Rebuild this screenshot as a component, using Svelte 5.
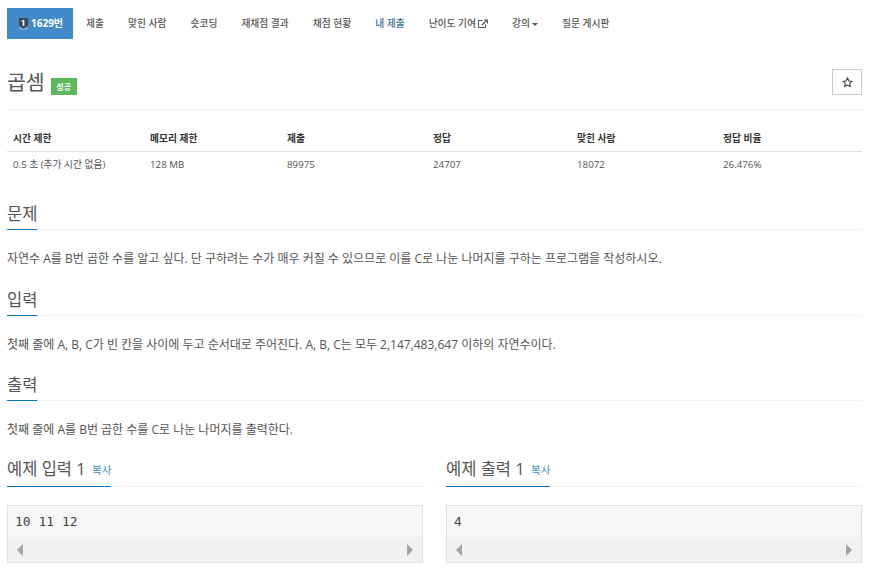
<script lang="ts">
const tabs = [
  { label: "제출" },
  { label: "맞힌 사람" },
  { label: "숏코딩" },
  { label: "재채점 결과" },
  { label: "채점 현황" },
  { label: "내 제출", mine: true },
  { label: "난이도 기여", external: true },
  { label: "강의", caret: true },
  { label: "질문 게시판" }
];
const heads = ["시간 제한", "메모리 제한", "제출", "정답", "맞힌 사람", "정답 비율"];
const cells = ["0.5 초 (추가 시간 없음)", "128 MB", "89975", "24707", "18072", "26.476%"];
const sections = [
  { title: "문제", text: "자연수 A를 B번 곱한 수를 알고 싶다. 단 구하려는 수가 매우 커질 수 있으므로 이를 C로 나눈 나머지를 구하는 프로그램을 작성하시오." },
  { title: "입력", text: "첫째 줄에 A, B, C가 빈 칸을 사이에 두고 순서대로 주어진다. A, B, C는 모두 2,147,483,647 이하의 자연수이다." },
  { title: "출력", text: "첫째 줄에 A를 B번 곱한 수를 C로 나눈 나머지를 출력한다." }
];
const samples = [
  { title: "예제 입력 1", value: "10 11 12" },
  { title: "예제 출력 1", value: "4" }
];
</script>

<div class="page">
  <nav class="tabs">
    <a class="tab active">
      <svg class="tier" viewBox="0 0 12 13" width="11" height="12"><path d="M1 0h10v8.5l-5 2.5-5-2.5z" fill="#3f4a55"/><path d="M1 10l5 2.5 5-2.5v1.2l-5 1.8-5-1.8z" fill="#cfd8df"/><path d="M5.2 2h1.7v6.5h-1.7v-4.7l-1.2.4v-1.1z" fill="#fff"/></svg>
      1629번
    </a>
    {#each tabs as t}
      <a class="tab" class:mine={t.mine}>
        {t.label}
        {#if t.external}
          <svg class="ext" viewBox="0 0 10 10" width="10" height="10"><path d="M7.5 5.5v3h-7v-7h4" fill="none" stroke="#555" stroke-width="1"/><path d="M4 6l4.5-4.5M6 1h3.5v3.5" fill="none" stroke="#555" stroke-width="1.2"/></svg>
        {/if}
        {#if t.caret}<span class="caret"></span>{/if}
      </a>
    {/each}
  </nav>

  <header class="title">
    <h1>곱셈</h1>
    <span class="badge">성공</span>
    <button class="star" aria-label="즐겨찾기">
      <svg viewBox="0 0 12 12" width="11" height="11"><path d="M6 1.1l1.5 3.2 3.4.4-2.5 2.4.7 3.4L6 8.8l-3.1 1.7.7-3.4L1.1 4.7l3.4-.4z" fill="none" stroke="#333" stroke-width="1.1"/></svg>
    </button>
  </header>

  <table class="info">
    <thead><tr>{#each heads as h}<th>{h}</th>{/each}</tr></thead>
    <tbody><tr>{#each cells as c}<td>{c}</td>{/each}</tr></tbody>
  </table>

  {#each sections as s}
    <section class="sec">
      <div class="headline"><h2>{s.title}</h2></div>
      <p>{s.text}</p>
    </section>
  {/each}

  <div class="samples">
    {#each samples as s}
      <section class="sample">
        <div class="headline"><h2>{s.title} <a class="copy">복사</a></h2></div>
        <div class="pre">
          <pre>{s.value}</pre>
          <div class="bar">
            <span class="arrow left"></span>
            <span class="arrow right"></span>
          </div>
        </div>
      </section>
    {/each}
  </div>
</div>

<style>
:global(body) {
  margin: 0;
  background: #fff;
  font-family: "Open Sans", "Noto Sans CJK KR", sans-serif;
  color: #333;
}
.page {
  padding: 8px 8px 0 7px;
  height: 564px;
  overflow: hidden;
}
.tabs {
  display: flex;
  height: 31px;
  font-size: 9.75px;
  font-weight: 500;
  line-height: 31px;
  color: #555;
}
.tab {
  padding: 0 12px;
  white-space: nowrap;
  display: flex;
  align-items: center;
  gap: 2px;
}
.tab.active {
  background: #428bca;
  color: #fff;
  font-size: 10px;
  font-weight: 700;
  padding: 0 10px 0 11px;
  gap: 2px;
  margin-right: 1px;
}
.tab.mine { color: #3b6f99; }
.caret {
  width: 0;
  height: 0;
  border-left: 3px solid transparent;
  border-right: 3px solid transparent;
  border-top: 3px solid #555;
  margin-top: 1px;
}
.title {
  display: flex;
  align-items: center;
  margin-top: 25px;
  height: 36px;
  padding-bottom: 9px;
  border-bottom: 1px solid #eee;
}
h1 {
  margin: 0;
  font-size: 20.5px;
  font-weight: 400;
  line-height: 28px;
  color: #555;
}
.badge {
  margin: 9px 0 0 6px;
  background: #5cb85c;
  color: #fff;
  font-size: 8px;
  font-weight: 700;
  line-height: 17px;
  width: 26px;
  text-align: center;
}
.star {
  margin-left: auto;
  width: 30px;
  height: 26px;
  padding: 0;
  background: #fff;
  border: 1px solid #ccc;
  display: flex;
  align-items: center;
  justify-content: center;
}
.info {
  width: 100%;
  margin-top: 14px;
  border-collapse: collapse;
  font-size: 9.75px;
  table-layout: fixed;
}
th, td {
  padding: 0 6px;
  text-align: left;
  height: 27px;
}
th {
  font-weight: 700;
  color: #333;
  border-bottom: 1px solid #ddd;
}
th:nth-child(1) { width: 125px; }
th:nth-child(2) { width: 125px; }
th:nth-child(3) { width: 134px; }
th:nth-child(4) { width: 132px; }
th:nth-child(5) { width: 134px; }
td { color: #555; height: 24px; }
.sec { margin-top: 24px; }
.sec + .sec { margin-top: 16.5px; }
.headline {
  display: flex;
  border-bottom: 1px dotted #e5e5e5;
  height: 29px;
}
h2 {
  margin: 0;
  font-size: 16.5px;
  font-weight: 400;
  line-height: 27px;
  color: #555;
  height: 30px;
  flex: none;
  box-sizing: border-box;
  border-bottom: 1px solid #0076c0;
}
.sample h2 { line-height: 23px; }
.sec p {
  margin: 0;
  padding-top: 19px;
  font-size: 12px;
  line-height: 20px;
  color: #555;
}
.samples {
  display: grid;
  grid-template-columns: 416px 416px;
  gap: 23px;
  margin-top: 17px;
}
.copy {
  font-size: 10.5px;
  color: #428bca;
  margin-left: 2px;
  vertical-align: 1px;
}
.pre {
  margin-top: 18px;
  border: 1px solid #e1e1e8;
  background: #f7f7f9;
}
pre {
  margin: 0;
  height: 31px;
  padding: 0 7px;
  font-family: "DejaVu Sans Mono", "Liberation Mono", monospace;
  font-size: 13px;
  line-height: 31px;
  color: #444;
}
.bar {
  display: flex;
  justify-content: space-between;
  align-items: center;
  height: 25px;
  padding: 0 9px;
  background: #f1f1f1;
}
.arrow {
  width: 0;
  height: 0;
  border-top: 6px solid transparent;
  border-bottom: 6px solid transparent;
}
.arrow.left { border-right: 6px solid #a3a3a3; }
.arrow.right { border-left: 6px solid #a3a3a3; }
</style>
